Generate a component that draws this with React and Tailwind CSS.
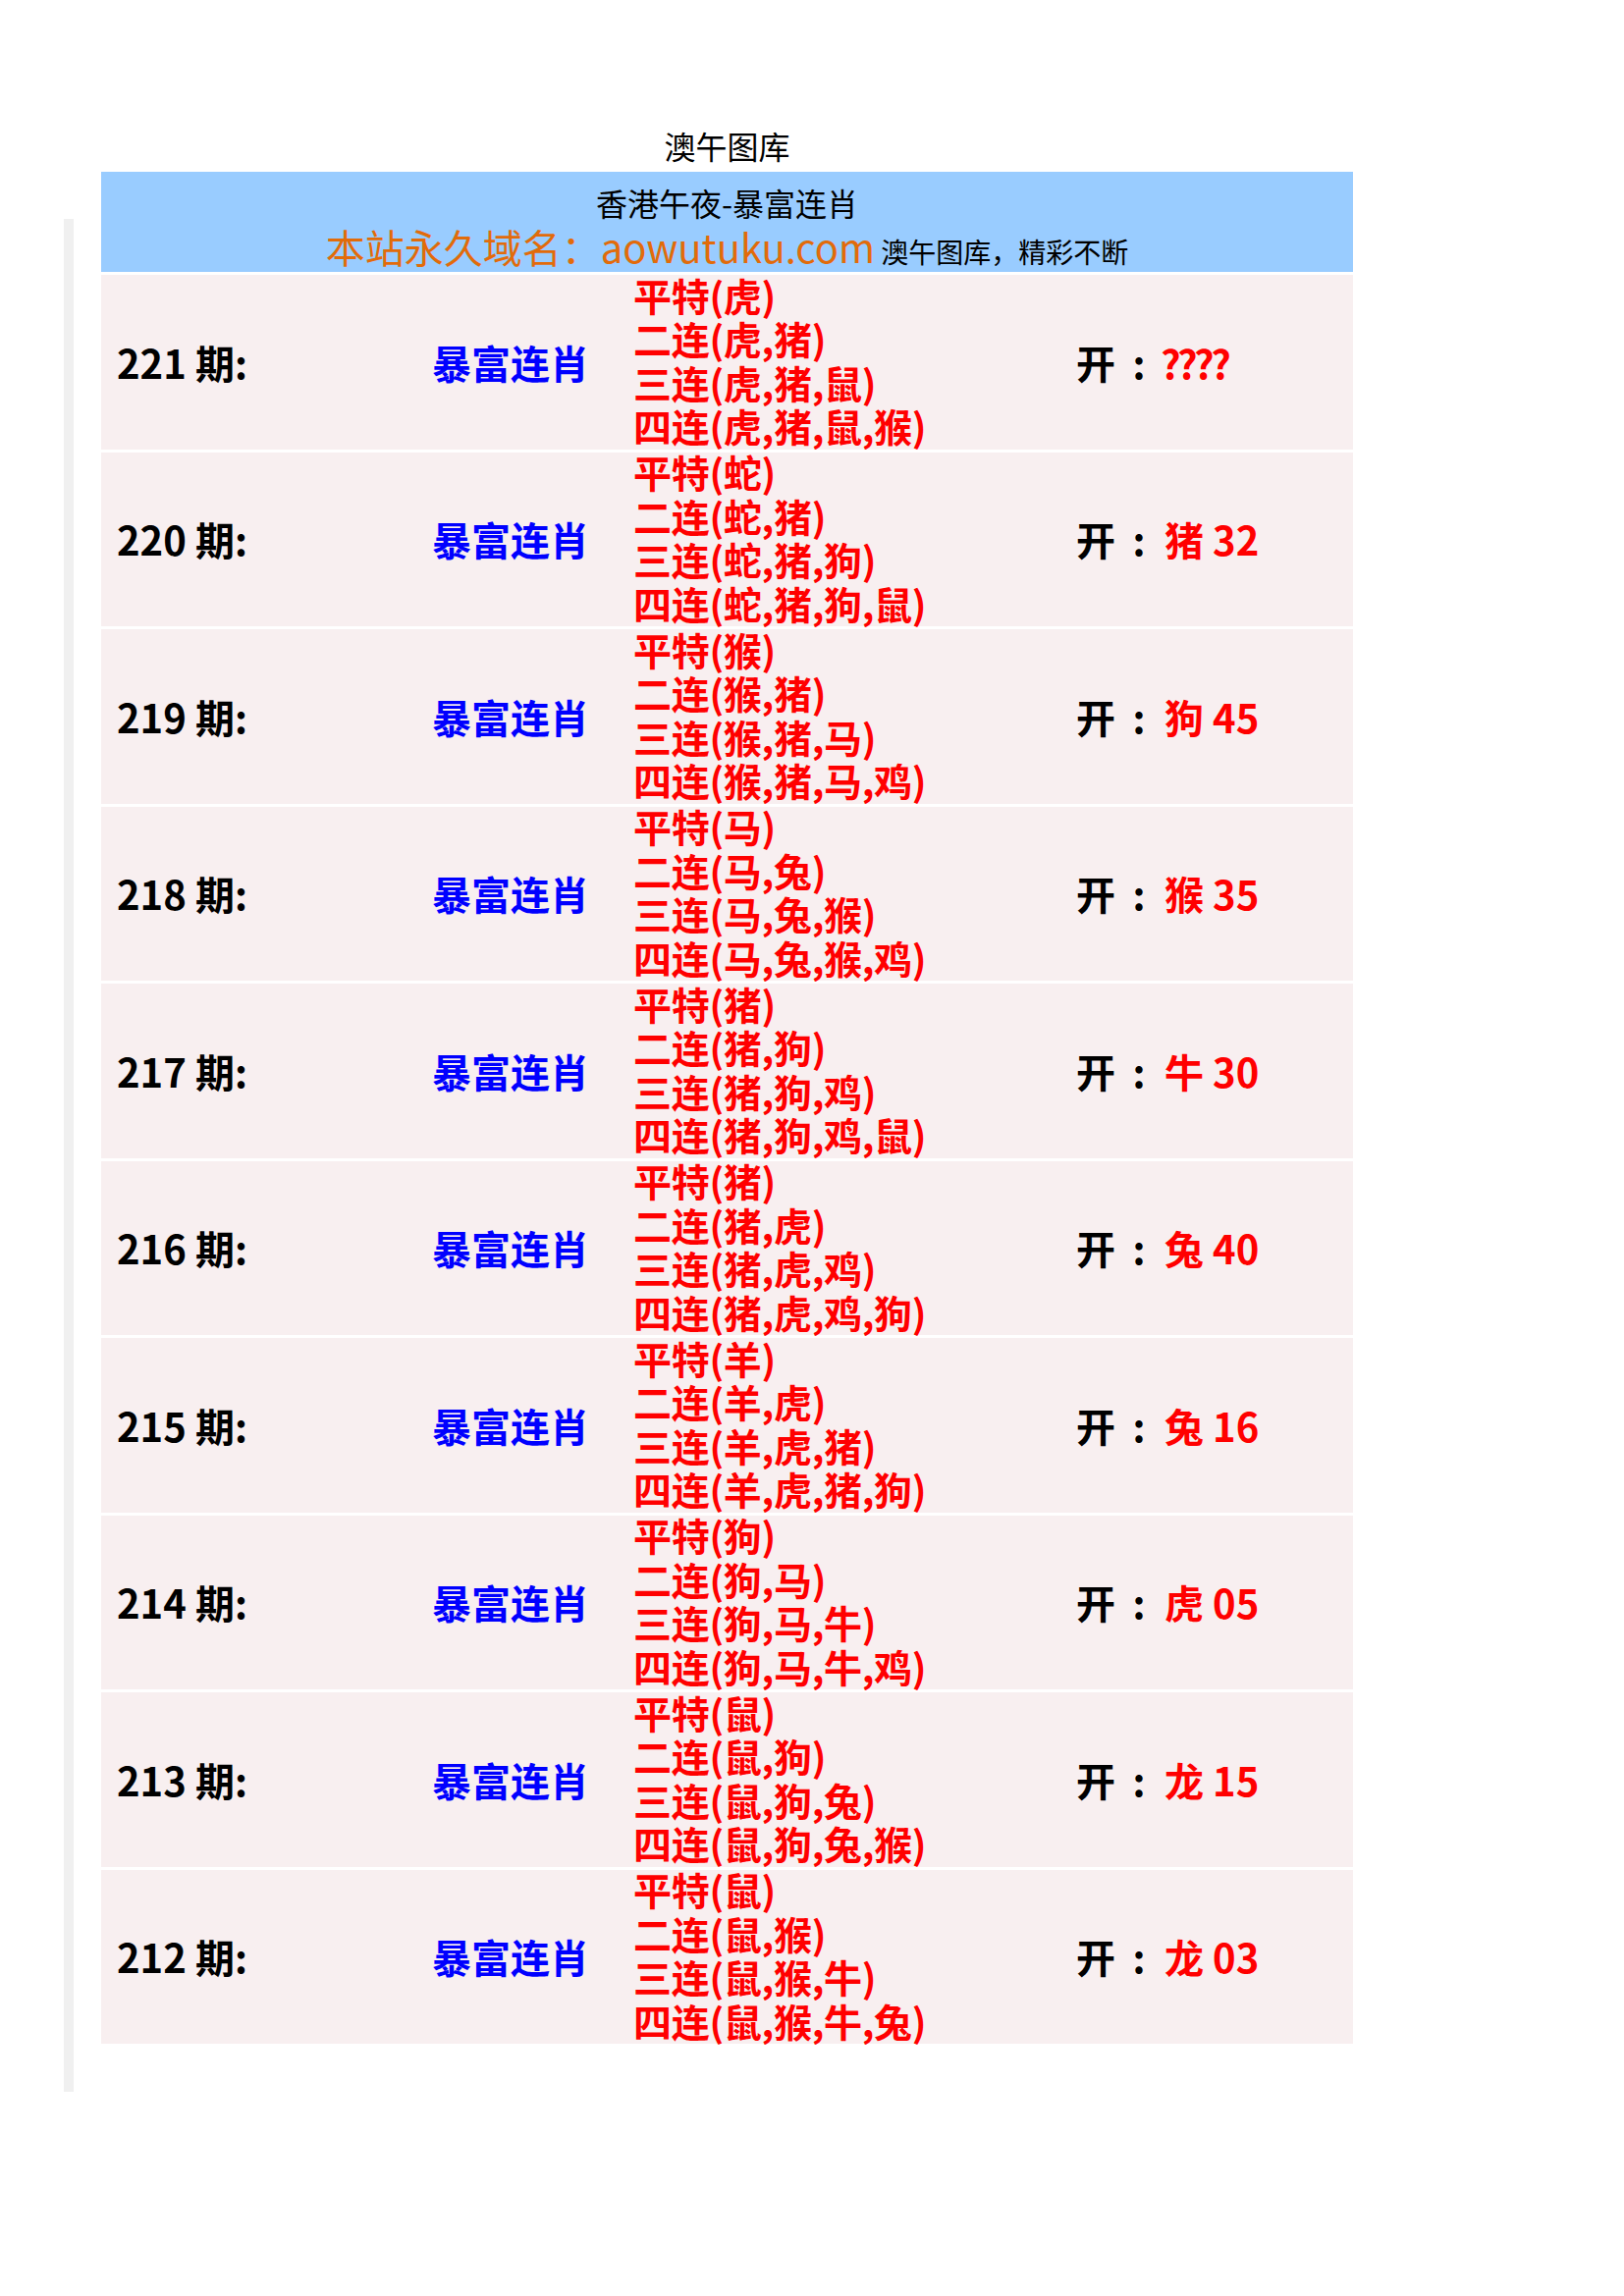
import React from "react";

const rows = [
  { n: "221", z: ["虎", "猪", "鼠", "猴"], r: "????" },
  { n: "220", z: ["蛇", "猪", "狗", "鼠"], r: "猪 32" },
  { n: "219", z: ["猴", "猪", "马", "鸡"], r: "狗 45" },
  { n: "218", z: ["马", "兔", "猴", "鸡"], r: "猴 35" },
  { n: "217", z: ["猪", "狗", "鸡", "鼠"], r: "牛 30" },
  { n: "216", z: ["猪", "虎", "鸡", "狗"], r: "兔 40" },
  { n: "215", z: ["羊", "虎", "猪", "狗"], r: "兔 16" },
  { n: "214", z: ["狗", "马", "牛", "鸡"], r: "虎 05" },
  { n: "213", z: ["鼠", "狗", "兔", "猴"], r: "龙 15" },
  { n: "212", z: ["鼠", "猴", "牛", "兔"], r: "龙 03" },
];

const labels = ["平特", "二连", "三连", "四连"];

function Row({ row }) {
  const unknown = row.r === "????";
  return (
    <div className="flex h-[177.5px] items-center bg-[#f8eff0]">
      <div className="w-[337px] pl-[16px] text-[40px] font-bold text-black">
        {row.n} 期:
      </div>
      <div className="w-[205px] text-[40px] font-bold text-[#0000ff]">暴富连肖</div>
      <div className="-mt-[4px] w-[451px] text-[39px] font-bold leading-[44.4px] tracking-[-0.3px] text-[#ff0000]">
        {labels.map((l, i) => (
          <div key={l} className="whitespace-nowrap">
            {l}({row.z.slice(0, i + 1).join(",")})
          </div>
        ))}
      </div>
      <div className="flex items-center text-[40px] font-bold">
        <span className="text-black">开</span>
        <span className="w-[48px] text-center text-black">:</span>
        <span className={unknown ? "ml-[-2px] tracking-[-3.5px] text-[#ff0000]" : "ml-[2px] text-[#ff0000]"}>
          {row.r}
        </span>
      </div>
    </div>
  );
}

export default function App() {
  return (
    <div
      className="h-[2339px] w-[1654px] bg-white"
      style={{ fontFamily: '"Noto Sans CJK SC", "Noto Sans", sans-serif' }}
    >
      <div className="flex items-start pl-[65px] pt-[120px]">
        <div className="mt-[103px] h-[1908px] w-[10px] bg-[#f0f0f0]" />
        <div className="ml-[28px] flex w-[1275px] flex-col">
          <div className="flex h-[55px] items-center justify-center text-[32px] text-black">
            澳午图库
          </div>
          <div className="flex flex-col gap-[3px]">
            <div className="flex h-[102px] flex-col items-center bg-[#99ccff] pt-[10px]">
              <div className="text-[32px] leading-[43px] text-black">香港午夜-暴富连肖</div>
              <div className="whitespace-nowrap text-[40px] leading-[46px] text-[#e26b0a]">
                本站永久域名：aowutuku.com
                <span className="text-[28px] leading-none text-black"> 澳午图库，精彩不断</span>
              </div>
            </div>
            {rows.map((r) => (
              <Row key={r.n} row={r} />
            ))}
          </div>
        </div>
      </div>
    </div>
  );
}
